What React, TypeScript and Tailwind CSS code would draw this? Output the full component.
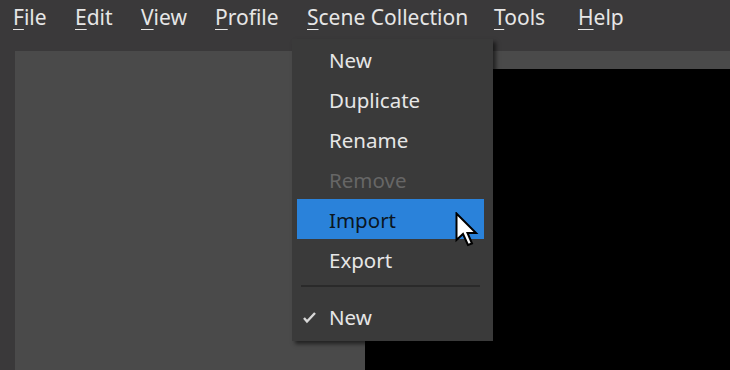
import React from 'react';

const menuBar = [
  { key: 'F', rest: 'ile', w: 'w-[62px]' },
  { key: 'E', rest: 'dit', w: 'w-[66px]' },
  { key: 'V', rest: 'iew', w: 'w-[74px]' },
  { key: 'P', rest: 'rofile', w: 'w-[92px]' },
  { key: 'S', rest: 'cene Collection', w: 'w-[187px]' },
  { key: 'T', rest: 'ools', w: 'w-[84px]' },
  { key: 'H', rest: 'elp', w: 'w-[80px]' },
];

function Item({ label, disabled, active }: { label: string; disabled?: boolean; active?: boolean }) {
  return (
    <div
      className={
        'h-[40px] mx-[5px] mr-[9px] pl-[32px] pt-[2px] flex items-center ' +
        (active ? 'bg-[#2a82da] text-[#0b1622]' : disabled ? 'text-[#666666]' : 'text-[#e6e6e6]')
      }
    >
      {label}
    </div>
  );
}

export default function App() {
  return (
    <div
      className="relative w-[730px] h-[370px] overflow-hidden bg-[#3a393a] flex flex-col text-[20.5px]"
      style={{ fontFamily: '"Noto Sans", "Open Sans", sans-serif' }}
    >
      {/* Menu bar */}
      <div className="h-[51px] flex items-start pt-[2px] pl-[13px] text-[21px] text-[#e6e6e6]">
        {menuBar.map((m) => (
          <div key={m.key} className={m.w + ' shrink-0 leading-[30px]'}>
            <span className="underline underline-offset-[4px] decoration-1">{m.key}</span>
            {m.rest}
          </div>
        ))}
      </div>

      {/* Workspace */}
      <div className="flex-1 ml-[15px] bg-[#4a4a4a] flex flex-col">
        <div className="h-[18px]" />
        <div className="flex-1 flex">
          <div className="w-[350px]" />
          <div className="flex-1 bg-black" />
        </div>
      </div>

      {/* Scene Collection dropdown */}
      <div className="absolute left-[292px] top-[39px] w-[201px] h-[302px] bg-[#3a3a3a] shadow-[3px_3px_4px_rgba(0,0,0,0.55)] flex flex-col">
        <Item label="New" />
        <Item label="Duplicate" />
        <Item label="Rename" />
        <Item label="Remove" disabled />
        <Item label="Import" active />
        <Item label="Export" />
        <div className="h-[17px] flex items-start pt-[6px] px-[9px] pr-[13px]">
          <div className="h-[2px] w-full bg-[#2a2a2a]" />
        </div>
        <div className="h-[40px] mx-[5px] pt-[2px] flex items-center text-[#e6e6e6]">
          <svg width="27" height="14" viewBox="0 0 27 14" className="shrink-0">
            <path d="M7 8 L10 11.5 L18 3" stroke="#d8d8d8" strokeWidth="2.4" fill="none" />
          </svg>
          <span className="pl-[5px]">New</span>
        </div>
      </div>

      {/* Mouse pointer */}
      <svg className="absolute left-[455px] top-[212px]" width="24" height="36" viewBox="0 0 24 36">
        <path
          d="M1.5 1.5 L1.5 28 L8 22 L13 33 L17 31.5 L12.5 21 L21 21 Z"
          fill="#ffffff"
          stroke="#000000"
          strokeWidth="2"
          strokeLinejoin="miter"
        />
      </svg>
    </div>
  );
}
